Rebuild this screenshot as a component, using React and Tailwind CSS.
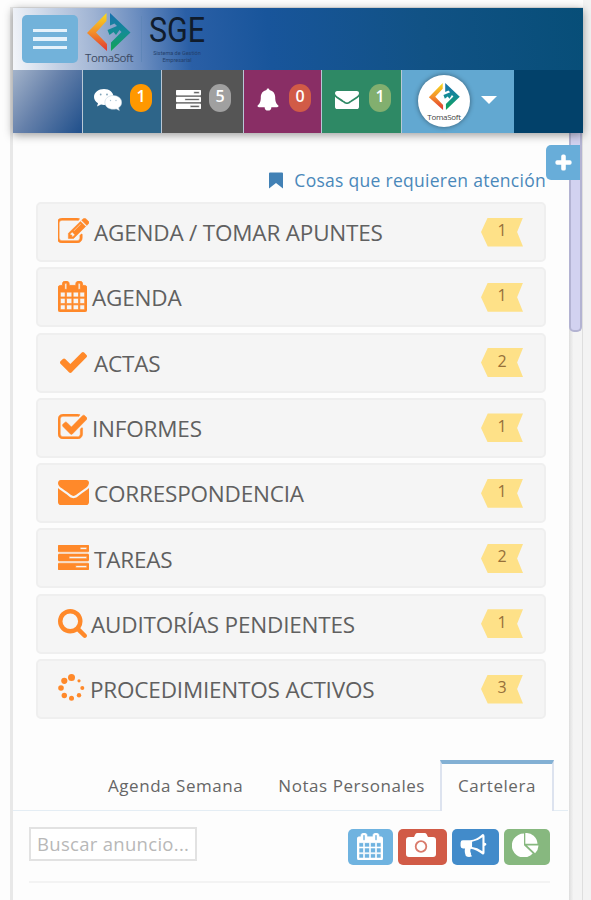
import { FaPlus } from 'react-icons/fa';

const paths = {
  edit: 'M888 1184l116-116-152-152-116 116v56h96v96h56zm440-720q-16-16-33 1l-350 350q-17 17-1 33t33-1l350-350q17-17 1-33zm80 594v190q0 119-84.5 203.5t-203.5 84.5h-832q-119 0-203.5-84.5t-84.5-203.5v-832q0-119 84.5-203.5t203.5-84.5h832q63 0 117 25 15 7 18 23 3 17-9 29l-49 49q-14 14-32 8-23-6-45-6h-832q-66 0-113 47t-47 113v832q0 66 47 113t113 47h832q66 0 113-47t47-113v-126q0-13 9-22l64-64q15-15 35-7t20 29zm-96-738l288 288-672 672h-288v-288zm444 132l-92 92-288-288 92-92q28-28 68-28t68 28l152 152q28 28 28 68t-28 68z',
  calendar: 'M192 1664h288v-288h-288v288zm352 0h320v-288h-320v288zm-352-352h288v-320h-288v320zm352 0h320v-320h-320v320zm-352-384h288v-288h-288v288zm736 736h320v-288h-320v288zm-384-736h320v-288h-320v288zm768 736h288v-288h-288v288zm-384-352h320v-320h-320v320zm-352-864v-288q0-13-9.500-22.500t-22.500-9.500h-64q-13 0-22.500 9.500t-9.500 22.500v288q0 13 9.500 22.500t22.500 9.500h64q13 0 22.500-9.500t9.500-22.500zm736 864h288v-320h-288v320zm-384-384h320v-288h-320v288zm384 0h288v-288h-288v288zm32-480v-288q0-13-9.500-22.500t-22.500-9.500h-64q-13 0-22.500 9.500t-9.500 22.500v288q0 13 9.500 22.500t22.500 9.500h64q13 0 22.500-9.500t9.500-22.500zm384-64v1280q0 52-38 90t-90 38h-1408q-52 0-90-38t-38-90v-1280q0-52 38-90t90-38h128v-96q0-66 47-113t113-47h64q66 0 113 47t47 113v96h384v-96q0-66 47-113t113-47h64q66 0 113 47t47 113v96h128q52 0 90 38t38 90z',
  check: 'M1671 566q0 40-28 68l-724 724-136 136q-28 28-68 28t-68-28l-136-136-362-362q-28-28-28-68t28-68l136-136q28-28 68-28t68 28l294 295 656-657q28-28 68-28t68 28l136 136q28 28 28 68z',
  checkSquare: 'M1472 930v318q0 119-84.5 203.5t-203.5 84.5h-832q-119 0-203.5-84.5t-84.5-203.5v-832q0-119 84.5-203.5t203.5-84.5h832q63 0 117 25 15 7 18 23 3 17-9 29l-49 49q-10 10-23 10-3 0-9-2-23-6-45-6h-832q-66 0-113 47t-47 113v832q0 66 47 113t113 47h832q66 0 113-47t47-113v-254q0-13 9-22l64-64q10-10 23-10 6 0 12 3 20 8 20 29zm231-489l-814 814q-24 24-57 24t-57-24l-430-430q-24-24-24-57t24-57l110-110q24-24 57-24t57 24l263 263 647-647q24-24 57-24t57 24l110 110q24 24 24 57t-24 57z',
  envelope: 'M1792 710v794q0 66-47 113t-113 47h-1472q-66 0-113-47t-47-113v-794q44 49 101 87 362 246 497 345 57 42 92.5 65.5t94.5 48 110 24.5h2q51 0 110-24.5t94.5-48 92.5-65.5q170-123 498-345 57-39 100-87zm0-294q0 79-49 151t-122 123q-376 261-468 325-10 7-42.5 31t-54 38.5-52 32.5-57.5 27-50 9h-2q-23 0-50-9t-57.5-27-52-32.5-54-38.5-42.5-31q-91-64-262-182.5t-205-142.5q-62-42-117-115.5t-55-136.5q0-78 41.5-130t118.5-52h1472q65 0 112.5 47t47.5 113z',
  tasks: 'M1024 1408h640v-128h-640v128zm-384-512h1024v-128h-1024v128zm640-512h384v-128h-384v128zm512 832v256q0 26-19 45t-45 19h-1664q-26 0-45-19t-19-45v-256q0-26 19-45t45-19h1664q26 0 45 19t19 45zm0-512v256q0 26-19 45t-45 19h-1664q-26 0-45-19t-19-45v-256q0-26 19-45t45-19h1664q26 0 45 19t19 45zm0-512v256q0 26-19 45t-45 19h-1664q-26 0-45-19t-19-45v-256q0-26 19-45t45-19h1664q26 0 45 19t19 45z',
  search: 'M1216 832q0-185-131.5-316.5t-316.5-131.5-316.5 131.5-131.5 316.5 131.5 316.5 316.5 131.5 316.5-131.5 131.5-316.5zm512 832q0 52-38 90t-90 38q-54 0-90-38l-343-342q-179 124-399 124-143 0-273.5-55.5t-225-150-150-225-55.5-273.5 55.5-273.5 150-225 225-150 273.5-55.5 273.5 55.5 225 150 150 225 55.5 273.5q0 220-124 399l343 343q37 37 37 90z',
};

const boxes = {
  edit: '64 128 1720 1408',
  calendar: '64 0 1664 1792',
  check: '121 334 1550 1188',
  checkSquare: '64 128 1663 1408',
  envelope: '0 256 1792 1408',
  tasks: '0 128 1792 1408',
  search: '64 128 1664 1664',
};

const Icon = ({ name, className, weight = 0 }) => (
  <svg viewBox={boxes[name]} preserveAspectRatio="none" className={className} fill="currentColor" stroke="currentColor" strokeWidth={weight}>
    <path d={paths[name]} />
  </svg>
);

const Spinner = ({ className }) => (
  <svg viewBox="0 0 27 27" className={className} fill="currentColor">
    <circle cx="13.500" cy="3.500" r="3.500" />
    <circle cx="6.300" cy="6.800" r="3.100" />
    <circle cx="3" cy="14" r="2.800" />
    <circle cx="6.300" cy="21.500" r="2.700" />
    <circle cx="13.500" cy="24.300" r="2.500" />
    <circle cx="21" cy="21.300" r="2.200" />
    <circle cx="24.300" cy="14" r="2" />
    <circle cx="21" cy="6.800" r="1.600" />
  </svg>
);

const Chat = () => (
  <svg viewBox="0 0 28 22" className="mb-[3px] h-[22px] w-[28px]">
    <path d="M10 0c5.500 0 9.500 3.500 9.500 8s-4 8-9.500 8q-1.600 0-3-.4L3 17.500l1-3.300C1.500 12.800 0 10.500 0 8c0-4.500 4.500-8 10-8z" fill="#fff" />
    <path d="M19.300 6.500c4.700 0 8.400 3 8.400 6.900 0 2.200-1.200 4.100-3.100 5.300l.8 2.800-3.200-1.600q-1.300.4-2.900.4c-4.700 0-8.400-3-8.400-6.900s3.700-6.900 8.400-6.900z" fill="#fff" stroke="#b4cad8" strokeWidth="0.500" />
    <circle cx="6.700" cy="5.500" r="0.900" fill="#7fa3b9" />
    <circle cx="13" cy="5.500" r="0.900" fill="#7fa3b9" />
    <circle cx="16.500" cy="11.500" r="0.700" fill="#a9c2d1" />
    <circle cx="22" cy="11.500" r="0.700" fill="#a9c2d1" />
  </svg>
);

const Logo = ({ className, id }) => (
  <svg viewBox="0 0 44 38" className={className}>
    <defs>
      <linearGradient id={`${id}-warm`} gradientUnits="userSpaceOnUse" x1="0" y1="0" x2="0" y2="38">
        <stop offset="0" stopColor="#f8dc1e" />
        <stop offset="0.500" stopColor="#f3902a" />
        <stop offset="1" stopColor="#e03432" />
      </linearGradient>
      <linearGradient id={`${id}-cool`} gradientUnits="userSpaceOnUse" x1="0" y1="0" x2="0" y2="38">
        <stop offset="0" stopColor="#1a6fae" />
        <stop offset="0.500" stopColor="#138c94" />
        <stop offset="1" stopColor="#12a552" />
      </linearGradient>
    </defs>
    <path d="M19.500 0v8L9 19.500 20 31v7L0 20z" fill={`url(#${id}-warm)`} />
    <path d="M23 0L43.500 19.500 24 38v-8.500L34.500 19l-2-2-3.500 5-2.500-3-4 3-2-5L30 13l-2.500-2.500-4.500 2z" fill={`url(#${id}-cool)`} />
  </svg>
);

const Bell = () => (
  <svg viewBox="0 0 22 24" className="mb-[4px] h-[23px] w-[22px]" fill="#fff">
    <path d="M9.500 2a1.500 1.500 0 0 1 3 0c4 .8 6 4 6 7.500 0 5 1.200 7.500 3.500 9 0 1-.8 1.500-1.500 1.500h-6a3.500 3.500 0 0 1-7 0h-6C.8 20 0 19.500 0 18.500c2.300-1.500 3.500-4 3.500-9C3.500 6 5.500 2.800 9.500 2z" />
  </svg>
);

const Camera = () => (
  <svg viewBox="0 0 30 24" className="h-[24px] w-[30px]">
    <path d="M3 4h5l1.500-3Q10 0 11.500 0h7q1.500 0 2 1L22 4h5q3 0 3 3v14q0 3-3 3H3q-3 0-3-3V7q0-3 3-3z" fill="#fff" />
    <circle cx="15" cy="13.500" r="5.300" fill="#fff" stroke="#d97a6b" strokeWidth="1.800" />
  </svg>
);

const Bullhorn = () => (
  <svg viewBox="0 0 27 24" className="h-[23px] w-[27px]" fill="#fff">
    <path fillRule="evenodd" d="M25 9.200V2q0-2-2-2-6.500 6-13 6.500H2.500Q0 6.500 0 9v3.500Q0 15 2.500 15h2.200q-1 3.500.8 8 3 1.700 6.500.2-1.800-2-1-3.200-1.600-2-.3-4.600Q17 16.500 23 21.500q2 0 2-2v-7q2-.3 2-1.700t-2-1.600zM22.800 18Q17.500 14 12 13.500V8.200Q17.500 7.500 22.800 3.500z" />
  </svg>
);

const PieChart = () => (
  <svg viewBox="0 0 27 24" className="h-[24px] w-[27px]" fill="#fff">
    <path d="M12 12.300l8.700 8.300A12 12 0 1 1 12 .5z" />
    <path d="M13.300 0A11.500 11.500 0 0 1 25.500 10.800H13.300z" />
    <path d="M15 12.600h11.500a11.500 11.500 0 0 1-3.400 7.700z" />
  </svg>
);

const notifications = [
  {
    icon: <Chat />,
    count: 1,
    bg: 'w-[78px] bg-[#2e6589] pl-[11px]',
    badge: 'bg-[#ff9800]',
    gap: 'ml-[8px]',
  },
  {
    icon: <Icon name="tasks" weight={30} className="mb-[5px] h-[19px] w-[25px]" />,
    count: 5,
    bg: 'w-[81px] bg-[#555555] pl-[14px]',
    badge: 'bg-[#a0a0a0]',
    gap: 'ml-[8px]',
  },
  {
    icon: <Bell />,
    count: 0,
    bg: 'w-[77px] bg-[#892e65] pl-[13px]',
    badge: 'bg-[#d15b47]',
    gap: 'ml-[10px]',
  },
  {
    icon: <Icon name="envelope" className="mb-[3px] h-[18px] w-[24px]" />,
    count: 1,
    bg: 'w-[79px] bg-[#2e8965] pl-[13px]',
    badge: 'bg-[#82af6f]',
    gap: 'ml-[10px]',
  },
];

const items = [
  { icon: <Icon name="edit" weight={30} className="h-[25px] w-[31px]" />, label: 'AGENDA / TOMAR APUNTES', count: 1, x: 'ml-[5px]' },
  { icon: <Icon name="calendar" weight={50} className="mt-[3px] h-[31px] w-[29px]" />, label: 'AGENDA', count: 1, x: 'ml-[5px]' },
  { icon: <Icon name="check" className="ml-[2px] mt-[3px] h-[21px] w-[27px]" />, label: 'ACTAS', count: 2, x: 'ml-[7px]' },
  { icon: <Icon name="checkSquare" weight={30} className="mt-[1px] h-[25px] w-[29px]" />, label: 'INFORMES', count: 1, x: 'ml-[5px]' },
  { icon: <Icon name="envelope" className="mt-[3px] h-[25px] w-[31px]" />, label: 'CORRESPONDENCIA', count: 1, x: 'ml-[5px]' },
  { icon: <Icon name="tasks" weight={40} className="mt-[3px] h-[25px] w-[31px]" />, label: 'TAREAS', count: 2, x: 'ml-[5px]' },
  { icon: <Icon name="search" className="mt-[4px] h-[29px] w-[29px]" />, label: 'AUDITORÍAS PENDIENTES', count: 1, x: 'ml-[4px]' },
  { icon: <Spinner className="h-[27px] w-[27px]" />, label: 'PROCEDIMIENTOS ACTIVOS', count: 3, x: 'ml-[5px]' },
];

const Header = () => (
  <header className="relative z-10 h-[125px] shadow-[0_2px_9px_rgba(0,0,0,0.4)]">
    <div className="flex h-[62px] bg-[linear-gradient(84deg,#f4f6fa_0%,#c3d0e4_8%,#9fb3d3_15%,#6f90c1_22%,#2a5fa6_31%,#18559b_45%,#115285_72%,#074e78_100%)] pl-[9px]">
      <button className="mt-[7px] flex h-[48px] w-[56px] flex-col items-center justify-center gap-[5px] rounded-[5px] bg-[#72b2da]" aria-label="Menú">
        <span className="h-[3.500px] w-[34px] bg-[#e6f2fb]" />
        <span className="h-[3.500px] w-[34px] bg-[#e6f2fb]" />
        <span className="h-[3.500px] w-[34px] bg-[#e6f2fb]" />
      </button>
      <div className="ml-[7px] mt-[5px] w-[50px]">
        <Logo id="brand" className="ml-[2px] h-[38px] w-[44px]" />
        <div className="-mt-px font-['Open_Sans'] text-[11.500px] leading-[15px] tracking-[-0.400px] text-[#3c4a63]">TomaSoft</div>
      </div>
      <div className="ml-[6px] mt-[8px] h-[46px] w-px bg-[#5f86b8]" />
      <div className="ml-[7px] w-[58px] font-[Roboto]">
        <div className="mt-[7px] h-[31px] text-[35px] leading-[31px] text-[#101c2c]">
          <span className="inline-block origin-left scale-x-[0.870]">SGE</span>
        </div>
        <div className="mt-[4px] w-[56px] text-center text-[5.500px] leading-[7px] text-[#23406c]">Sistema de Gestión Empresarial</div>
      </div>
    </div>
    <div className="flex h-[63px] bg-[#02416a]">
      <div className="w-[69px] bg-[linear-gradient(125deg,#a3b3ca_0%,#6580aa_45%,#1f4f8b_100%)]" />
      <div className="flex gap-px bg-[#b9c8d6] pl-px">
        {notifications.map((n, i) => (
          <div key={i} className={`flex items-center text-white ${n.bg}`}>
            {n.icon}
            <span className={`-mt-[8px] flex h-[28px] w-[22px] items-center justify-center rounded-full pb-[3px] font-['Open_Sans'] text-[16px] font-semibold ${n.gap} ${n.badge}`}>
              {n.count}
            </span>
          </div>
        ))}
        <div className="flex w-[112px] items-center bg-[#62a8d1] pl-[16px]">
          <div className="mb-[1px] flex h-[52px] w-[52px] flex-col items-center rounded-full bg-white pt-[8px] shadow-[0_0_5px_rgba(0,0,0,0.45)]">
            <Logo id="avatar" className="h-[27px] w-[33px]" />
            <span className="mt-[2px] font-['Open_Sans'] text-[8px] leading-[9px] tracking-[-0.300px] text-[#444]">TomaSoft</span>
          </div>
          <span className="-mt-[3px] ml-[11px] border-x-[8px] border-t-[8px] border-x-transparent border-t-white" />
        </div>
      </div>
    </div>
  </header>
);

const AttentionItem = ({ icon, label, count, x }) => (
  <li className="flex h-[60px] items-center rounded-[5px] border-2 border-[#efefef] bg-[#f5f5f5] pl-[20px] pr-[21px]">
    <span className="-mt-[4px] shrink-0 text-[#ff892a]">{icon}</span>
    <span className={`mt-[2px] whitespace-nowrap text-[22.500px] tracking-[-0.190px] text-[#606060] ${x}`}>{label}</span>
    <span className="ml-auto flex h-[29px] w-[42px] items-center justify-center bg-[#fee188] pb-[4px] text-[16px] font-medium text-[#96703a] [clip-path:polygon(0_50%,16%_0,100%_0,86%_50%,100%_100%,16%_100%)]">
      {count}
    </span>
  </li>
);

const App = () => {
  return (
    <div className="flex h-[900px] w-full overflow-hidden bg-[#fdfdfd] pl-[10px] pt-[7px] font-['Open_Sans',sans-serif]">
      <div className="relative w-[573px] border-l-[3px] border-t border-[#e8e8e8] bg-[#fdfdfd]">
        <Header />

        {/* Scrollbar */}
        <div className="absolute right-0 top-[125px] h-[768px] w-[14px] border-r border-[#dedede] bg-[linear-gradient(90deg,#dedede,#f4f4f4_35%,#f4f4f4)]">
          <div className="h-[199px] w-[13px] rounded-b-[5px] border-2 border-t-0 border-[#b3b3d2] bg-[#d2d2f0]" />
        </div>
        <button className="absolute right-[3px] top-[137px] flex h-[35px] w-[34px] items-center justify-center rounded-l-[5px] bg-[#68add9] text-white" aria-label="Ajustes">
          <FaPlus size={17} stroke="currentColor" strokeWidth={40} />
        </button>

        <main className="pl-[23px] pr-[37px]">
          <div className="mt-[34px] flex h-[26px] items-center justify-end text-[17.500px] text-[#4a88ba]">
            <svg viewBox="0 0 14 16" className="mr-[11px] h-[17px] w-[14px]" fill="#4281b5">
              <path d="M1 0h12Q14 0 14 1V16l-7-5.500L0 16V1Q0 0 1 0z" />
            </svg>
            <span className="whitespace-nowrap tracking-[0.280px]">Cosas que requieren atención</span>
          </div>
          <ul className="mt-[9px] flex flex-col gap-[5.300px]">
            {items.map((item) => (
              <AttentionItem key={item.label} {...item} />
            ))}
          </ul>
        </main>

        {/* Tabs */}
        <nav className="mt-[41px] flex h-[51px] items-stretch text-[17px] tracking-[0.550px] text-[#666]">
          <div className="flex flex-1 items-center justify-end gap-[35px] border-b border-[#e4edf4] pr-[15px] pt-[2px]">
            <span className="whitespace-nowrap">Agenda Semana</span>
            <span className="whitespace-nowrap">Notas Personales</span>
          </div>
          <div className="flex w-[114px] items-center justify-center border-x-2 border-t-[4px] border-[#dde3ef] border-t-[#83b0d4] pb-[3px]">Cartelera</div>
          <div className="mr-[15px] w-[14px] border-b border-[#e4edf4]" />
        </nav>

        <div className="ml-[16px] mr-[33px] mt-[16px] flex h-[56px] border-b-2 border-[#f3f3f3]">
          <input
            type="text"
            placeholder="Buscar anuncio..."
            className="h-[34px] w-[168px] border-2 border-[#e2e2e2] bg-white pb-[2px] pl-[6px] text-[18.500px] tracking-[0.300px] placeholder:text-[#b8b8b8]"
          />
          <div className="ml-auto mt-[2px] flex gap-[5px]">
            <button className="flex h-[36px] w-[45px] items-center justify-center rounded-[5px] bg-[#6fb3e0] pb-[2px] pr-[2px] text-white">
              <Icon name="calendar" weight={40} className="h-[27px] w-[26px]" />
            </button>
            <button className="flex h-[36px] w-[49px] items-center justify-center rounded-[5px] bg-[#d15b47] pb-[4px] pr-[3px]">
              <Camera />
            </button>
            <button className="flex h-[36px] w-[47px] items-center justify-center rounded-[5px] bg-[#428bca] pb-[3px] pr-[4px]">
              <Bullhorn />
            </button>
            <button className="flex h-[36px] w-[46px] items-center justify-center rounded-[5px] bg-[#87b87f] pb-[4px] pr-[4px]">
              <PieChart />
            </button>
          </div>
        </div>
      </div>
      <div className="-mt-[7px] flex-1 bg-[#f3f3f3]" />
    </div>
  );
};

export default App;
